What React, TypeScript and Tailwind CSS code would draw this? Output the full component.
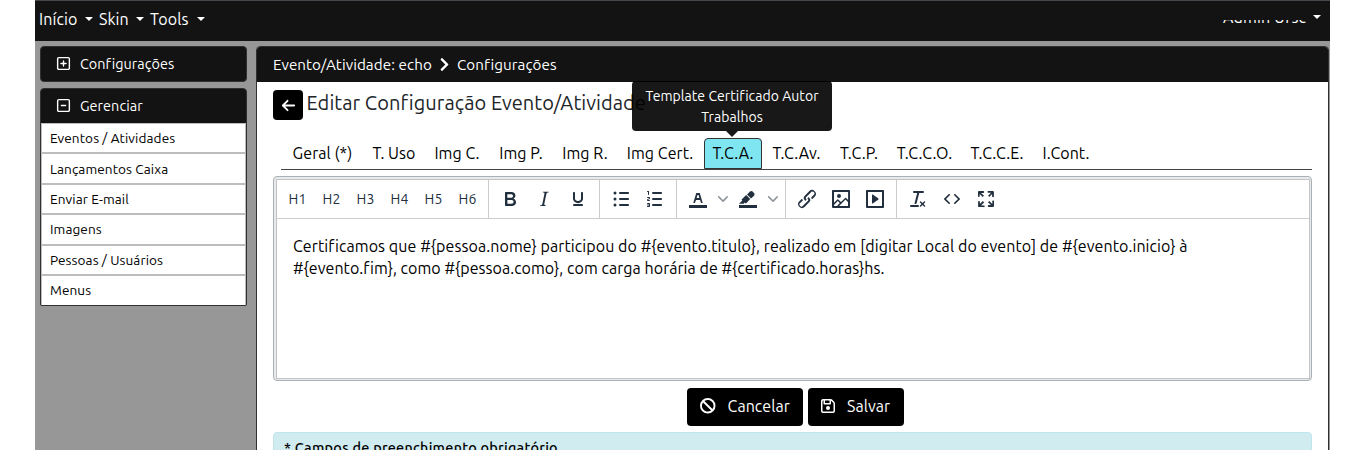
import type { ReactNode } from "react";
import { FaChevronRight } from "react-icons/fa";
import { FaArrowLeft, FaRegFloppyDisk, FaRegSquareMinus, FaRegSquarePlus, FaBan } from "react-icons/fa6";

const menuItems = ["Eventos / Atividades", "Lançamentos Caixa", "Enviar E-mail", "Imagens", "Pessoas / Usuários", "Menus"];

const tabs = [
  { label: "Geral (*)", width: "w-[81px]" },
  { label: "T. Uso", width: "w-[62px]" },
  { label: "Img C.", width: "w-[64px]" },
  { label: "Img P.", width: "w-[64px]" },
  { label: "Img R.", width: "w-[64px]" },
  { label: "Img Cert.", width: "w-[86px]" },
  { label: "T.C.A.", width: "w-[60px]", active: true },
  { label: "T.C.Av.", width: "w-[67px]" },
  { label: "T.C.P.", width: "w-[58px]" },
  { label: "T.C.C.O.", width: "w-[73px]" },
  { label: "T.C.C.E.", width: "w-[72px]" },
  { label: "I.Cont.", width: "w-[66px]" },
];

const icons = {
  bold: "M7.8 19c-.3 0-.5 0-.6-.2l-.2-.5V5.7c0-.2 0-.4.2-.5l.6-.2h5c1.5 0 2.7.3 3.5 1 .7.6 1.1 1.4 1.1 2.5a3 3 0 01-.6 1.9c-.4.6-1 1-1.6 1.2.4.1.9.3 1.3.6s.8.7 1 1.2c.4.4.5 1 .5 1.6 0 1.3-.4 2.3-1.3 3-.8.7-2.1 1-3.8 1H7.8zm5-8.3c.6 0 1.2-.1 1.6-.5.4-.3.6-.7.6-1.3 0-1.1-.8-1.7-2.3-1.7H9.3v3.5h3.4zm.5 6c.7 0 1.3-.1 1.7-.4.4-.4.6-.9.6-1.5s-.2-1-.7-1.4c-.4-.3-1-.4-2-.4H9.4v3.8h4z",
  italic: "M16.7 4.7l-.1.9h-.3c-.6 0-1 0-1.4.3-.3.3-.4.6-.5 1.1l-2.1 9.8v.6c0 .5.4.8 1.4.8h.2l-.2.8H8l.2-.8h.2c1.1 0 1.8-.5 2-1.5l2-9.8.1-.5c0-.6-.4-.8-1.4-.8h-.3l.2-.9h5.8z",
  underline: "M16 5c.6 0 1 .4 1 1v5.5a4 4 0 01-.4 1.8l-1 1.4a5.3 5.3 0 01-5.5 1 5 5 0 01-1.6-1c-.5-.4-.8-.9-1.1-1.4a4 4 0 01-.4-1.8V6c0-.6.4-1 1-1s1 .4 1 1v5.5c0 .3 0 .6.2 1l.6.7a3.3 3.3 0 002.2.8 3.4 3.4 0 002.2-.8c.3-.2.4-.5.6-.8l.2-.9V6c0-.6.4-1 1-1zM8 17h8c.6 0 1 .4 1 1s-.4 1-1 1H8a1 1 0 010-2z",
  bullets: "M11 5h8c.6 0 1 .4 1 1s-.4 1-1 1h-8a1 1 0 010-2zm0 6h8c.6 0 1 .4 1 1s-.4 1-1 1h-8a1 1 0 010-2zm0 6h8c.6 0 1 .4 1 1s-.4 1-1 1h-8a1 1 0 010-2zM4.5 6a1.5 1.5 0 113 0 1.5 1.5 0 01-3 0zm0 6a1.5 1.5 0 113 0 1.5 1.5 0 01-3 0zm0 6a1.5 1.5 0 113 0 1.5 1.5 0 01-3 0z",
  numbers: "M10 17h8c.6 0 1 .4 1 1s-.4 1-1 1h-8a1 1 0 010-2zm0-6h8c.6 0 1 .4 1 1s-.4 1-1 1h-8a1 1 0 010-2zm0-6h8c.6 0 1 .4 1 1s-.4 1-1 1h-8a1 1 0 110-2zM6 4v3.5c0 .3-.2.5-.5.5a.5.5 0 01-.5-.5V5h-.5a.5.5 0 010-1H6zm-1 8.8l.2.2h1.3c.3 0 .5.2.5.5s-.2.5-.5.5H4.9a1 1 0 01-.9-1V13c0-.4.3-.8.6-1l1.2-.4.2-.3a.2.2 0 00-.2-.2H4.5a.5.5 0 01-.5-.5c0-.3.2-.5.5-.5h1.6c.5 0 .9.4.9 1v.1c0 .4-.3.8-.6 1l-1.2.4-.2.3zM7 17v2c0 .6-.4 1-1 1H4.5a.5.5 0 010-1h1.2c.2 0 .3-.1.3-.3 0-.2-.1-.3-.3-.3H4.4a.4.4 0 110-.8h1.3c.2 0 .3-.1.3-.3 0-.2-.1-.3-.3-.3H4.5a.5.5 0 110-1H6c.6 0 1 .4 1 1z",
  textColor: "M3 18h18v3H3zM8.7 16h-.8a.5.5 0 01-.5-.6l2.7-9c.1-.3.3-.4.5-.4h2.8c.2 0 .4.1.5.4l2.7 9a.5.5 0 01-.5.6h-.8a.5.5 0 01-.4-.4l-.7-2.2c0-.3-.3-.4-.5-.4h-3.4c-.2 0-.4.1-.5.4l-.7 2.2c0 .3-.2.4-.4.4zm2.6-7.6l-.6 2a.5.5 0 00.5.6h1.6a.5.5 0 00.5-.6l-.6-2c0-.3-.3-.4-.5-.4h-.4c-.2 0-.4.1-.5.4z",
  highlight: "M3 18h18v3H3zM7.7 16.7H3l3.3-3.3-.7-.8L10.2 8l4 4.1-4 4.2c-.2.2-.6.2-.8 0l-.6-.7-1.1 1.1zm5-7.5L11 7.4l3-2.9a2 2 0 012.6 0L18 6c.7.7.7 2 0 2.7l-2.9 2.9-1.8-1.8-.5-.6z",
  link: "M6.2 12.3a1 1 0 011.4 1.4l-2.1 2a2 2 0 102.7 2.8l4.8-4.8a1 1 0 000-1.4 1 1 0 111.4-1.3 2.9 2.9 0 010 4L9.6 20a3.9 3.9 0 01-5.5-5.5l2-2zm11.6-.6a1 1 0 01-1.4-1.4l2-2a2 2 0 10-2.6-2.8L11 10.3a1 1 0 000 1.4A1 1 0 119.6 13a2.9 2.9 0 010-4L14.4 4a3.9 3.9 0 015.5 5.5l-2 2z",
  image: "M5 15.7l3.3-3.2c.3-.3.7-.3 1 0L12 15l4.1-4c.3-.4.8-.4 1 0l2 1.9V5H5v10.7zM5 18V19h3l2.8-2.9-2-2L5 17.9zm14-3l-2.5-2.4-6.4 6.5H19v-4zM4 3h16c.6 0 1 .4 1 1v16c0 .6-.4 1-1 1H4a1 1 0 01-1-1V4c0-.6.4-1 1-1zm6 8a2 2 0 100-4 2 2 0 000 4z",
  media: "M4 3h16c.6 0 1 .4 1 1v16c0 .6-.4 1-1 1H4a1 1 0 01-1-1V4c0-.6.4-1 1-1zm1 2v14h14V5H5zm4.8 2.6l5.6 4a.5.5 0 010 .8l-5.6 4A.5.5 0 019 16V8a.5.5 0 01.8-.4z",
  clear: "M13.2 6a1 1 0 010 .2l-2.6 10a1 1 0 01-1 .8h-.2a.8.8 0 01-.8-1l2.6-10H8a1 1 0 110-2h9a1 1 0 010 2h-3.8zM5 18h7a1 1 0 010 2H5a1 1 0 010-2zm13 1.5L16.5 18 15 19.5a.7.7 0 01-1-1l1.5-1.5-1.5-1.5a.7.7 0 011-1l1.5 1.5 1.5-1.5a.7.7 0 011 1L17.5 17l1.5 1.5a.7.7 0 01-1 1z",
  code: "M9.8 15.7c.3.3.3.8 0 1-.3.4-.9.4-1.2 0l-4.4-4.1a.8.8 0 010-1.2l4.4-4.2c.3-.3.9-.3 1.2 0 .3.3.3.8 0 1.1L6 12l3.8 3.7zM14.2 15.7c-.3.3-.3.8 0 1 .4.4.9.4 1.2 0l4.4-4.1c.3-.3.3-.8 0-1.2l-4.4-4.2a.8.8 0 00-1.2 0c-.3.3-.3.8 0 1.1L18 12l-3.8 3.7z",
  fullscreen: "M15.3 10l-1.2-1.3 2.9-3h-2.3a.9.9 0 110-1.7H19c.5 0 .9.4.9.9v4.4a.9.9 0 11-1.8 0V7l-2.9 3zm0 4l3 3v-2.3a.9.9 0 111.7 0V19c0 .5-.4.9-.9.9h-4.4a.9.9 0 110-1.8H17l-3-2.9 1.3-1.2zM10 15.4l-2.9 3h2.3a.9.9 0 110 1.7H5a.9.9 0 01-.9-.9v-4.4a.9.9 0 111.8 0V17l2.9-3 1.2 1.3zM8.7 10L5.7 7v2.3a.9.9 0 01-1.7 0V5c0-.5.4-.9.9-.9h4.4a.9.9 0 010 1.8H7l3 2.9-1.3 1.2z",
};

function ToolButton({ icon }: { icon: keyof typeof icons }) {
  return (
    <button className="flex h-[34px] w-[34px] shrink-0 items-center justify-center">
      <svg width="24" height="24" viewBox="0 0 24 24" fill="currentColor" fillRule="evenodd">
        <path d={icons[icon]} />
      </svg>
    </button>
  );
}

function SplitArrow() {
  return (
    <button className="flex h-[34px] w-4 shrink-0 items-center justify-center opacity-50">
      <svg width="10" height="10" viewBox="0 0 10 10" fill="currentColor">
        <path d="M8.7 2.2c.3-.3.8-.3 1 0 .4.4.4.9 0 1.2L5.7 7.8c-.3.3-.9.3-1.2 0L.2 3.4a.8.8 0 010-1.2c.3-.3.8-.3 1.1 0L5 6l3.7-3.8z" />
      </svg>
    </button>
  );
}

function ToolGroup({ children, last }: { children: ReactNode; last?: boolean }) {
  return <div className={last ? "flex items-center px-1" : "flex items-center border-r border-[#ccc] px-1"}>{children}</div>;
}

function Caret() {
  return <span className="h-0 w-0 border-x-4 border-t-4 border-x-transparent border-t-white" />;
}

export default function App() {
  return (
    <div className="h-[450px] overflow-hidden bg-white pl-[35px] font-['Ubuntu','Noto_Sans',sans-serif] text-base tracking-[0.06px] text-black">
      <div className="flex h-[450px] w-[1295px] flex-col bg-[#979797]">
        <nav className="flex h-[41px] shrink-0 justify-between border-t border-[#46474d] bg-[#131313] pr-[9px] pl-1 text-white">
          <div className="flex h-9 items-center">
            <span className="w-[46px] tracking-[0.1px]">Início</span>
            <Caret />
            <span className="w-[43px] pl-1.5">Skin</span>
            <Caret />
            <span className="w-[53px] pl-1.5 tracking-[0.1px]">Tools</span>
            <Caret />
          </div>
          <div className="flex h-[22px]">
            <span className="mt-[19px] flex h-[3px] w-[90px] items-end overflow-hidden leading-[16px] tracking-[0.14px] whitespace-nowrap">
              <span className="-mb-[2px]">Admin Ufsc</span>
            </span>
            <span className="mt-[14px] flex h-1">
              <Caret />
            </span>
          </div>
        </nav>

        <div className="flex min-h-0 flex-1 pt-[5px]">
          <aside className="ml-[5px] flex w-[207px] shrink-0 flex-col gap-1.5">
            <div className="flex h-9 shrink-0 items-center rounded-[4px] border border-[#303030] bg-[#131313] pl-[15px] text-[14.4px] text-white">
              <FaRegSquarePlus className="mb-px size-[15px]" />
              <span className="ml-[9px] pt-px">Configurações</span>
            </div>
            <div className="h-[218px] shrink-0 overflow-hidden rounded-t-[4px] rounded-b-[2px] border border-[#303030] bg-[#131313]">
              <div className="flex h-[34px] items-center pl-[15px] text-[14.4px] text-white">
                <FaRegSquareMinus className="mb-px size-[15px]" />
                <span className="ml-[9px] pt-px">Gerenciar</span>
              </div>
              <ul className="grid h-[182px] grid-rows-[30px_31px_30px_31px_30px_30px] border-x border-t border-[#bdbdbd] bg-white text-[13.6px] tracking-[0.09px]">
                {menuItems.map((item) => (
                  <li key={item} className="flex items-center border-b-2 border-[#bdbdbd] pl-2 last:border-b nth-2:pt-px">
                    {item}
                  </li>
                ))}
              </ul>
            </div>
          </aside>

          <main className="ml-[9px] h-[450px] w-[1073px] shrink-0 rounded-t-[4px] border border-[#303030] bg-white">
            <div className="flex h-[35px] items-center rounded-t-[3px] bg-[#131313] pt-0.5 pl-4 text-[15.2px] tracking-[0.08px] text-white">
              <span>Evento/Atividade: echo</span>
              <FaChevronRight className="mx-[5px] mb-0.5 size-[15px]" />
              <span>Configurações</span>
            </div>

            <div className="px-4">
              <div className="flex h-[47px] items-start pt-2">
                <button className="flex h-[30px] w-[30px] items-center justify-center rounded-[4px] bg-black text-white">
                  <FaArrowLeft className="size-[15px]" />
                </button>
                <h1 className="mt-px ml-[3.5px] text-[20px] leading-6 tracking-[0.07px] text-[#212529]">
                  Editar Configuração Evento/Atividade
                </h1>
              </div>

              <div className="ml-2 flex h-[41px] items-end border-b border-[#444] pl-px">
                {tabs.map((tab) => (
                  <div key={tab.label} className={`${tab.width} relative flex h-[31px] shrink-0 justify-center px-px whitespace-nowrap`}>
                    <div
                      className={
                        tab.active
                          ? "flex h-[31px] w-full items-center justify-center rounded-t-[4px] border border-[#333] bg-[#7fe5f0] pb-px"
                          : "flex h-[31px] items-center pb-px"
                      }
                    >
                      {tab.label}
                    </div>
                    {tab.active && (
                      <div className="absolute bottom-[31px] left-[calc(50%-1px)] flex -translate-x-1/2 flex-col items-center pb-px opacity-90">
                        <div className="w-[200px] rounded-[4px] bg-black px-2 pt-[5px] pb-[3px] text-center text-[14px] leading-[21px] whitespace-normal text-white">
                          Template Certificado Autor Trabalhos
                        </div>
                        <span className="h-0 w-0 border-x-[6px] border-t-[6px] border-x-transparent border-t-black" />
                      </div>
                    )}
                  </div>
                ))}
              </div>

              <div className="mt-1.5 h-[205px] rounded-[4px] border border-[#a8b3b8] bg-[#e9e9eb] pt-0.5 pr-px pb-px pl-0.5">
                <div className="h-full border border-[#c4c4c4] bg-white">
                  <div className="flex h-[39px] border-b border-[#ccc] text-[#222f3e]">
                    <div className="flex border-r border-[#ccc] pr-[3px] pl-1">
                      {["H1", "H2", "H3", "H4", "H5", "H6"].map((heading) => (
                        <button key={heading} className="w-[34px] pr-px text-center text-[14px]">
                          {heading}
                        </button>
                      ))}
                    </div>
                    <ToolGroup>
                      <ToolButton icon="bold" />
                      <ToolButton icon="italic" />
                      <ToolButton icon="underline" />
                    </ToolGroup>
                    <ToolGroup>
                      <ToolButton icon="bullets" />
                      <ToolButton icon="numbers" />
                    </ToolGroup>
                    <ToolGroup>
                      <ToolButton icon="textColor" />
                      <SplitArrow />
                      <ToolButton icon="highlight" />
                      <SplitArrow />
                    </ToolGroup>
                    <ToolGroup>
                      <ToolButton icon="link" />
                      <ToolButton icon="image" />
                      <ToolButton icon="media" />
                    </ToolGroup>
                    <ToolGroup last>
                      <ToolButton icon="clear" />
                      <ToolButton icon="code" />
                      <ToolButton icon="fullscreen" />
                    </ToolGroup>
                  </div>
                  <div className="pt-4 pl-4 leading-[22.4px] tracking-[0.08px] whitespace-nowrap">
                    <p>
                      Certificamos que #&#123;pessoa.nome&#125; participou do #&#123;evento.titulo&#125;, realizado em [digitar Local do
                      evento] de #&#123;evento.inicio&#125; à
                    </p>
                    <p className="tracking-[0.05px]">
                      #&#123;evento.fim&#125;, como #&#123;pessoa.como&#125;, com carga horária de #&#123;certificado.horas&#125;hs.
                    </p>
                  </div>
                </div>
              </div>

              <div className="mt-[7px] flex justify-center gap-[5px] pl-1.5 text-white">
                <button className="flex h-[38px] w-[116px] items-center rounded-[4px] bg-black pb-0.5 pl-[13px]">
                  <FaBan className="size-[15.5px]" />
                  <span className="ml-3">Cancelar</span>
                </button>
                <button className="flex h-[38px] w-24 items-center rounded-[4px] bg-black pb-0.5 pl-3">
                  <FaRegFloppyDisk className="size-4" />
                  <span className="ml-[11px]">Salvar</span>
                </button>
              </div>

              <div className="mt-1.5 rounded-[4px] border border-[#bee5eb] bg-[#d1ecf1] px-[10px] py-1.5 text-[14.4px] leading-[18px] font-medium tracking-[0.25px]">
                * Campos de preenchimento obrigatório
              </div>
            </div>
          </main>
        </div>
      </div>
    </div>
  );
}
